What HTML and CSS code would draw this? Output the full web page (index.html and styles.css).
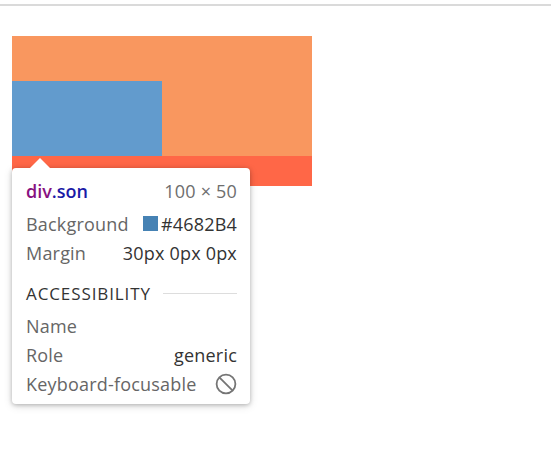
FILE: index.html
```html
<!DOCTYPE html>
<html>
<head>
<meta charset="utf-8">
<link rel="stylesheet" href="styles.css">
</head>
<body>
<div class="topline"></div>
<div class="stage">
  <div class="parent">
    <div class="child"></div>
  </div>
  <div class="strip"></div>
  <div class="tooltip">
    <div class="arrow"></div>
    <div class="row head">
      <span class="sel"><span class="tag">div</span><span class="cls">.son</span></span>
      <span class="dim">100 × 50</span>
    </div>
    <div class="row">
      <span class="label">Background</span>
      <span class="value"><span class="swatch"></span>#4682B4</span>
    </div>
    <div class="row">
      <span class="label">Margin</span>
      <span class="value">30px 0px 0px</span>
    </div>
    <div class="row section">
      <span class="sectitle">ACCESSIBILITY</span>
      <span class="rule"></span>
    </div>
    <div class="row">
      <span class="label">Name</span>
      <span class="value"></span>
    </div>
    <div class="row">
      <span class="label">Role</span>
      <span class="value">generic</span>
    </div>
    <div class="row">
      <span class="label">Keyboard-focusable</span>
      <svg class="noicon" width="22" height="22" viewBox="0 0 22 22"><circle cx="11" cy="11" r="9.4" fill="none" stroke="#757575" stroke-width="1.8"/><line x1="4.6" y1="4.6" x2="17.4" y2="17.4" stroke="#757575" stroke-width="1.8"/></svg>
    </div>
  </div>
</div>
</body>
</html>
```
FILE: styles.css
```css
html, body {
  margin: 0;
  padding: 0;
  background: #ffffff;
}
body {
  font-family: "Open Sans", "Noto Sans", sans-serif;
  width: 551px;
  height: 456px;
  overflow: hidden;
}
.topline {
  margin-top: 4px;
  height: 2px;
  background: #dadada;
}
.stage {
  position: relative;
  padding: 30px 0 0 12px;
}
.parent {
  width: 300px;
  height: 120px;
  padding-top: 45px;
  box-sizing: border-box;
  background: #f9975f;
}
.child {
  width: 150px;
  height: 75px;
  background: #629bcd;
}
.strip {
  width: 300px;
  height: 30px;
  background: #ff6747;
}
.tooltip {
  position: absolute;
  left: 12px;
  top: 162px;
  width: 238px;
  box-sizing: border-box;
  padding: 8px 13px 6px 14px;
  background: #ffffff;
  border-radius: 4px;
  box-shadow: 0 1px 4px rgba(0,0,0,0.25), 0 2px 10px rgba(0,0,0,0.12);
}
.arrow {
  position: absolute;
  left: 18px;
  top: -10px;
  width: 0;
  height: 0;
  border-left: 10px solid transparent;
  border-right: 10px solid transparent;
  border-bottom: 10px solid #ffffff;
}
.row {
  display: flex;
  justify-content: space-between;
  align-items: center;
  height: 29px;
  font-size: 18px;
  letter-spacing: 0.2px;
  color: #666666;
  white-space: nowrap;
}
.head {
  margin-bottom: 4px;
}
.sel {
  font-weight: 600;
  letter-spacing: 0;
}
.tag {
  color: #881280;
}
.cls {
  color: #1a1aa6;
}
.dim {
  color: #6e6e6e;
}
.value {
  color: #333333;
  display: flex;
  align-items: center;
}
.swatch {
  display: inline-block;
  width: 15px;
  height: 15px;
  background: #4682b4;
  margin-right: 3px;
}
.section {
  margin-top: 12px;
  margin-bottom: 3px;
}
.sectitle {
  font-size: 17px;
  color: #333333;
  letter-spacing: 0.9px;
}
.rule {
  flex: 1;
  height: 1px;
  background: #dddddd;
  margin-left: 12px;
}
.noicon {
  margin-right: 0;
}
```
